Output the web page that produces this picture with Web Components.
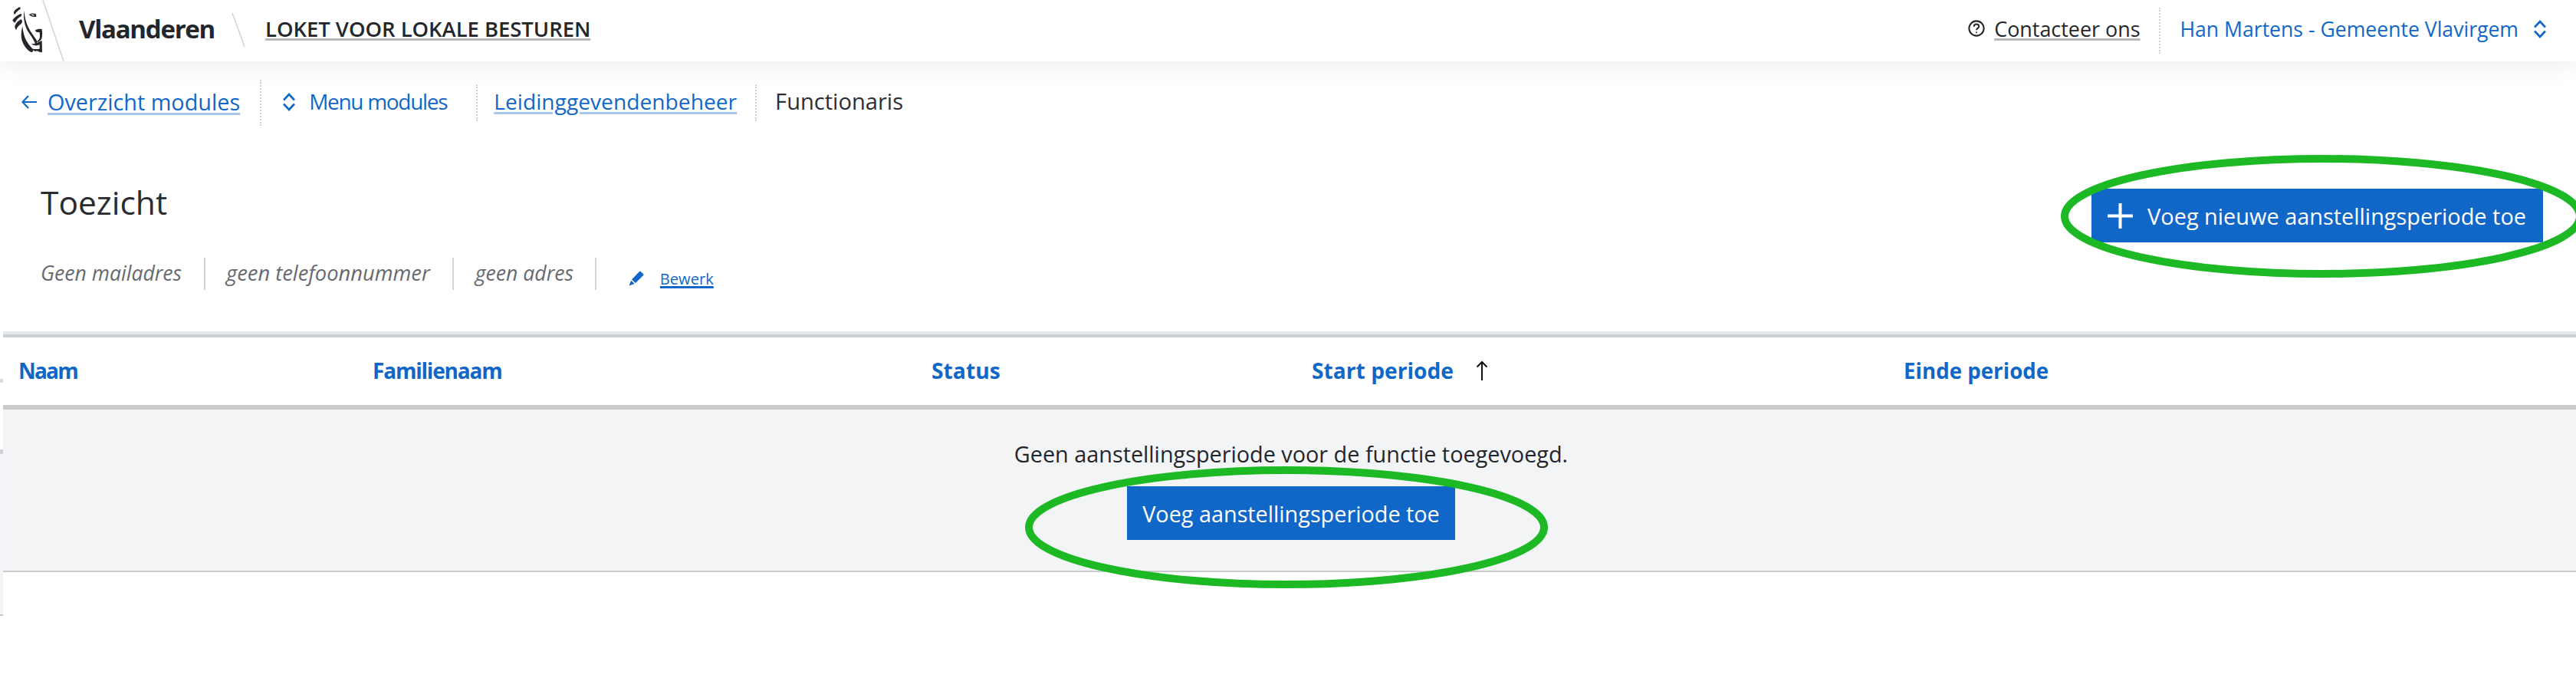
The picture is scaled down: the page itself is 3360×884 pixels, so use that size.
<!DOCTYPE html>
<html lang="nl"><head><meta charset="utf-8"><title>Toezicht</title>
<style>
html,body{margin:0;padding:0;background:#fff}
body{width:3360px;height:884px;overflow:hidden;position:relative;font-family:"Open Sans","Noto Sans",sans-serif;color:#23262b}
</style></head><body>
<app-header></app-header>
<crumb-bar></crumb-bar>
<page-head></page-head>
<empty-table></empty-table>
<annot-ellipse style="left:2688px;top:202px;width:682px;height:160px"></annot-ellipse>
<annot-ellipse style="left:1337px;top:608px;width:682px;height:159px"></annot-ellipse>
<edge-sliver></edge-sliver>
<script>
function def(name, html){
  customElements.define(name, class extends HTMLElement{
    constructor(){super();this.attachShadow({mode:'open'}).innerHTML=html;}
  });
}
const FONT='font-family:"Open Sans","Noto Sans",sans-serif;';
const BLUE='#1167c8';
const chev='<svg width="18" height="24" viewBox="0 0 18 24" fill="none" stroke="#1167c8" stroke-width="2.6"><path d="M2 9.500 9 2l7 7.500M2 14.500 9 22l7-7.500"/></svg>';

def('action-btn',`<style>
:host{display:inline-flex;align-items:center;height:70px;background:${BLUE};color:#fff;padding:0 20px;${FONT}font-size:28.8px;font-weight:500;white-space:nowrap;box-sizing:border-box}
</style><slot name="icon"></slot><slot></slot>`);

def('app-header',`<style>
:host{display:flex;align-items:center;height:80px;background:#fff;box-shadow:0 2px 34px rgba(0,0,0,.09);position:relative;${FONT}}
.logo{margin:0 0 4px 11px;flex:none}
.slash1{flex:none;margin-left:-7px;align-self:stretch}
.brand{font-size:33px;letter-spacing:-1.26px;font-weight:700;color:#23262b;margin:0 0 5px 19px}
.slash2{flex:none;margin-left:22px;align-self:flex-start;margin-top:17px}
.sub{font-size:27.4px;font-weight:600;color:#23262b;margin:0 0 5px 26px;text-decoration:underline;text-decoration-color:#b6b8bb;text-decoration-thickness:3px;text-underline-offset:2px;white-space:nowrap}
.right{margin-left:auto;display:flex;align-items:center;height:60px;padding-right:38px}
.q{flex:none;margin:0 12px 6px 0}
.c{font-size:26.9px;color:#23262b;margin-bottom:5px;text-decoration:underline;text-decoration-color:#b6b8bb;text-decoration-thickness:3px;text-underline-offset:2px}
.sep{width:0;height:60px;border-left:2px dotted #cbd2da;margin:0 25px}
.u{font-size:26.6px;color:${BLUE};margin:0 19px 5px 0;white-space:nowrap}
.ch{display:flex;margin-bottom:4px}
</style>
<svg class="logo" width="50" height="66" viewBox="0 0 150 198" fill="#23262b" fill-rule="evenodd">
<path d="M45 12C47 15 47 18 46 21 37 26 30 33 25 42 20 38 20 34 22 30 27 22 36 16 45 12Z"/>
<path d="M50 38C52 42 52 45 50 48 38 55 30 63 26 74 21 72 17 68 16 64 24 52 36 43 50 38Z"/>
<path d="M50 60C55 66 55 72 50 78 42 84 34 91 30 102 25 96 24 90 26 84 31 73 40 65 50 60Z"/>
<path d="M61 26C64 52 68 72 78 92 88 112 100 126 110 142 113 150 112 158 108 166 104 146 90 128 78 110 64 88 58 60 61 26Z"/>
<path d="M55 88C57 112 64 136 74 150 80 160 88 170 96 177 98 181 96 188 92 190 76 184 62 168 54 146 48 128 50 106 55 88Z"/>
<path d="M80 42C88 36 100 36 108 40L109 50C100 53 88 50 80 42ZM88 42C93 46 98 47 103 46 99 41 93 40 88 42Z"/>
<path d="M104 104C112 98 122 97 131 99 133 112 133 126 130 136 126 146 118 150 106 150 112 146 120 142 122 134 124 126 123 117 121 110 115 113 108 110 104 104Z"/>
<path d="M88 156C100 158 112 154 120 148 124 147 128 146 131 143L132 190C125 190 118 187 112 184 109 184 107 185 105 186 100 184 96 180 94 176 104 178 114 177 122 176L122 160C112 164 98 164 88 156Z"/>
</svg>
<svg class="slash1" width="30" height="80" viewBox="0 0 30 80"><path d="M2 0 29 80" stroke="#cfd5e0" stroke-width="1.600"/></svg>
<span class="brand">Vlaanderen</span>
<svg class="slash2" width="18" height="44" viewBox="0 0 18 44"><path d="M1 0 17 44" stroke="#cfd5e0" stroke-width="1.600"/></svg>
<span class="sub">LOKET VOOR LOKALE BESTUREN</span>
<div class="right">
<svg class="q" width="22" height="22" viewBox="0 0 24 24" fill="none" stroke="#23262b" stroke-width="2.200"><circle cx="12" cy="12" r="10.500"/><path d="M8.500 9.500C8.500 7.500 10 6 12 6s3.500 1.400 3.500 3.200c0 2.600-3.500 2.800-3.500 5.300"/><circle cx="12" cy="17.600" r="1.100" fill="#23262b" stroke="none"/></svg>
<span class="c">Contacteer ons</span><span class="sep"></span>
<span class="u">Han Martens - Gemeente Vlavirgem</span><span class="ch">${chev}</span>
</div>`);

def('crumb-bar',`<style>
:host{display:flex;align-items:center;height:108px;padding-left:28px;${FONT}color:${BLUE};white-space:nowrap}
a,span.t{margin-bottom:4px}
a{color:inherit;font-size:28.8px;text-decoration:underline;text-decoration-color:#a9c7ea;text-decoration-thickness:3px;text-underline-offset:3px}
.s{border-left:2px dotted #cbd2da;flex:none}
.m{margin:0 17px 2px 0;flex:none;display:flex}
.ar{margin:0 14px 2px 0;flex:none}
</style>
<svg class="ar" width="20" height="20" viewBox="0 0 20 20" fill="none" stroke="${BLUE}" stroke-width="2.200"><path d="M9 2 1.500 10 9 18M2 10h18"/></svg>
<a>Overzicht modules</a><span class="s" style="height:60px;margin:0 27px 0 26px"></span>
<span class="m">${chev}</span><span class="t" style="font-size:28px;letter-spacing:-1.300px">Menu modules</span><span class="s" style="height:48px;margin:0 21px 0 38px"></span>
<a style="font-size:28.200px">Leidinggevendenbeheer</a><span class="s" style="height:48px;margin:0 24px 0 24px"></span><span class="t" style="font-size:29.100px;color:#2c2e33">Functionaris</span>`);

def('page-head',`<style>
:host{display:flex;justify-content:space-between;align-items:flex-start;height:244px;padding:58px 43px 0 53px;box-sizing:border-box;${FONT}}
h1{margin:-6px 0 0;font-size:42.500px;font-weight:400;line-height:48px;color:#2a2c30}
.meta{display:flex;align-items:stretch;height:42px;margin-top:48px;font-style:italic;color:#666a70;white-space:nowrap}
.meta>span{display:block;line-height:36px;padding:2px 29px 0 0;margin-right:27px;border-right:2px solid #cfd3da}
.ed{display:flex;align-items:center;margin-left:15px;padding-top:12px;font-size:20.100px;font-style:normal;color:${BLUE};gap:21px}
.ed a{color:inherit;text-decoration:underline;text-decoration-thickness:2.500px;text-underline-offset:2px}
svg{flex:none}
</style>
<div><h1>Toezicht</h1>
<div class="meta"><span style="font-size:26.600px">Geen mailadres</span><span style="font-size:27.300px;margin-right:28px">geen telefoonnummer</span><span style="font-size:26.600px;padding-right:28px;margin-right:27px">geen adres</span>
<div class="ed"><svg width="20" height="20" viewBox="0 0 20 20" fill="${BLUE}"><path d="M13.500 1.500c.8-.8 1.600-.8 2.300-.2l3 2.600c.8.8.8 1.600 0 2.400L9 16 4 11.500zM3.200 12.800 7.700 17 .5 19.500z"/></svg><a>Bewerk</a></div></div></div>
<action-btn style="padding:0 22px 0 21px;font-size:28.900px"><svg slot="icon" style="display:block;margin-right:19px" width="33" height="33" viewBox="0 0 33 33" fill="#fff"><path d="M14.500 0h4v14.500H33v4H18.500V33h-4V18.500H0v-4h14.500z"/></svg>Voeg nieuwe aanstellingsperiode toe</action-btn>`);

def('empty-table',`<style>
:host{display:block;margin-left:4px;${FONT}}
.top{height:4px;background:#e6e8eb}.top2{height:4px;background:#cdd0d4}
.hd{display:grid;grid-template-columns:462px 729px 496px 772px 1fr;height:88px;box-sizing:content-box;align-items:center;border-bottom:6px solid #c9cacc;font-weight:700;color:${BLUE}}
.hd div{padding:0 0 3px 20px;display:flex;align-items:center;gap:29px}
.em{height:210px;background:#f3f4f6;border-bottom:2px solid #c9cacc;display:flex;flex-direction:column;align-items:center;padding-left:4px}
.em p{margin:36px 0 20px;line-height:44px;font-size:28.800px;color:#23262b}
</style>
<div class="top"></div><div class="top2"></div>
<div class="hd"><div style="font-size:28px;letter-spacing:-1.800px">Naam</div><div style="font-size:28px;letter-spacing:-1.200px">Familienaam</div><div style="font-size:28.300px">Status</div><div style="font-size:28.200px">Start periode<svg width="16" height="26" viewBox="0 0 16 26" fill="none" stroke="#111" stroke-width="2"><path d="M8 26V2M1.500 8.500 8 2l6.500 6.500"/></svg></div><div style="font-size:27.700px">Einde periode</div></div>
<div class="em"><p>Geen aanstellingsperiode voor de functie toegevoegd.</p><action-btn>Voeg aanstellingsperiode toe</action-btn></div>`);

def('annot-ellipse',`<style>
:host{display:block;position:absolute;pointer-events:none}
svg{display:block;width:100%;height:100%;overflow:visible}
ellipse{cx:50%;cy:50%;rx:calc(50% - 5px);ry:calc(50% - 5px);fill:none;stroke:#1cb925;stroke-width:10px}
</style><svg><ellipse/></svg>`);

def('edge-sliver',`<style>
:host{display:block;position:absolute;left:0;top:0;width:4px;height:884px}
i{position:absolute;left:0;width:4px;display:block}
</style>
<i style="top:494px;height:5px;background:#d8dadd"></i>
<i style="top:586px;height:6px;background:#d0d2d5"></i>
<i style="top:592px;height:209px;background:#f3f5f8"></i>
<i style="top:801px;height:2px;background:#c9cacc"></i>`);
</script>
</body></html>
